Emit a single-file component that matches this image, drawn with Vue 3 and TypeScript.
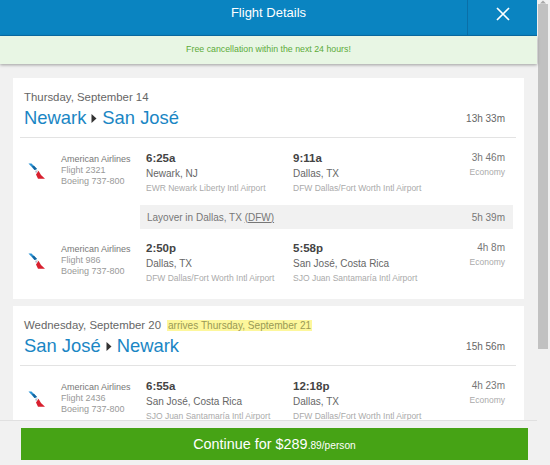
<script setup lang="ts">
interface Seg { airline: string; flight: string; plane: string; dep: string; depCity: string; depAir: string; arr: string; arrCity: string; arrAir: string; dur: string; layover?: boolean }
interface Trip { date: string; arrives?: string; from: string; to: string; total: string; segs: Seg[] }
const trips: Trip[] = [
  { date: 'Thursday, September 14', from: 'Newark', to: 'San José', total: '13h 33m', segs: [
    { airline: 'American Airlines', flight: 'Flight 2321', plane: 'Boeing 737-800', dep: '6:25a', depCity: 'Newark, NJ', depAir: 'EWR Newark Liberty Intl Airport', arr: '9:11a', arrCity: 'Dallas, TX', arrAir: 'DFW Dallas/Fort Worth Intl Airport', dur: '3h 46m', layover: true },
    { airline: 'American Airlines', flight: 'Flight 986', plane: 'Boeing 737-800', dep: '2:50p', depCity: 'Dallas, TX', depAir: 'DFW Dallas/Fort Worth Intl Airport', arr: '5:58p', arrCity: 'San José, Costa Rica', arrAir: 'SJO Juan Santamaría Intl Airport', dur: '4h 8m' }
  ] },
  { date: 'Wednesday, September 20', arrives: 'arrives Thursday, September 21', from: 'San José', to: 'Newark', total: '15h 56m', segs: [
    { airline: 'American Airlines', flight: 'Flight 2436', plane: 'Boeing 737-800', dep: '6:55a', depCity: 'San José, Costa Rica', depAir: 'SJO Juan Santamaría Intl Airport', arr: '12:18p', arrCity: 'Dallas, TX', arrAir: 'DFW Dallas/Fort Worth Intl Airport', dur: '4h 23m' }
  ] }
]
</script>

<template>
  <div class="page">
    <div class="main">
      <header class="header">
        <div class="title">Flight Details</div>
        <div class="close">
          <svg width="14" height="14" viewBox="0 0 14 14"><path d="M1 1 L13 13 M13 1 L1 13" stroke="#fff" stroke-width="1.7" fill="none" /></svg>
        </div>
      </header>
      <div class="banner">Free cancellation within the next 24 hours!</div>
      <div class="content">
        <section v-for="t in trips" :key="t.date" class="card">
          <div class="trip-head">
            <div class="date">{{ t.date }}<span v-if="t.arrives" class="arrives">{{ t.arrives }}</span></div>
            <div class="route-row">
              <div class="route">{{ t.from }}<svg class="arrow" width="6" height="9" viewBox="0 0 6 9"><path d="M0.5 0 L5.5 4.5 L0.5 9 Z" fill="#333" /></svg>{{ t.to }}</div>
              <div class="total">{{ t.total }}</div>
            </div>
          </div>
          <div class="segs">
            <template v-for="s in t.segs" :key="s.flight">
              <div class="seg">
                <div class="logo">
                  <svg width="19" height="18" viewBox="0 0 19 18">
                    <path d="M0.5 0.5 L3.5 0.5 L9 6 L6.5 7 Z" fill="#2a93d5" />
                    <path d="M4 3.2 L6 2.8 L9 6 L6.5 7 Z" fill="#14659f" />
                    <path d="M10.5 7.8 L13 12 L17 15.8 L10 15.8 L8 11.5 Z" fill="#d8202f" />
                    <path d="M7 7.8 L10 7.2 L8 10.5 Z" fill="#b9c3cc" />
                  </svg>
                </div>
                <div class="airline">
                  <div class="name">{{ s.airline }}</div>
                  <div class="sub">{{ s.flight }}</div>
                  <div class="sub">{{ s.plane }}</div>
                </div>
                <div class="stop">
                  <div class="time">{{ s.dep }}</div>
                  <div class="city">{{ s.depCity }}</div>
                  <div class="airport">{{ s.depAir }}</div>
                </div>
                <div class="stop">
                  <div class="time">{{ s.arr }}</div>
                  <div class="city">{{ s.arrCity }}</div>
                  <div class="airport">{{ s.arrAir }}</div>
                </div>
                <div class="dur">
                  <div class="dur-time">{{ s.dur }}</div>
                  <div class="cabin">Economy</div>
                </div>
              </div>
              <div v-if="s.layover" class="layover">
                <span>Layover in Dallas, TX <u>(DFW)</u></span>
                <span>5h 39m</span>
              </div>
            </template>
          </div>
        </section>
      </div>
      <footer class="footer">
        <button class="continue">Continue for <span class="price">$289</span><span class="cents">.89/person</span></button>
      </footer>
    </div>
    <div class="scrollbar">
      <svg class="scroll-up" width="10" height="4" viewBox="0 0 10 4"><path d="M5 0.5 L8 3.5 L2 3.5 Z" fill="#a8a8a8" /></svg>
      <div class="thumb"></div>
    </div>
  </div>
</template>

<style>
html, body { margin: 0; padding: 0; overflow: hidden; background: #fff; }
</style>

<style scoped>
.page {
  display: flex;
  width: 550px;
  height: 465px;
  overflow: hidden;
  font-family: "Liberation Sans", Arial, sans-serif;
  color: #555;
  background: #f1f1f1;
}
.main {
  width: 537px;
  height: 465px;
  display: flex;
  flex-direction: column;
  position: relative;
}
.header {
  flex: none;
  height: 35px;
  background: #0a84c1;
  border-bottom: 1px solid #0a6fa8;
  display: flex;
  position: relative;
  justify-content: center;
  align-items: center;
}
.title { color: #fff; font-size: 13px; line-height: 26px; padding-bottom: 9px; }
.close {
  position: absolute;
  right: 0;
  top: 0;
  width: 70px;
  height: 35px;
  border-left: 1px solid #0a6fa8;
  box-sizing: border-box;
  display: flex;
  align-items: center;
  justify-content: center;
  padding-bottom: 7px;
}
.banner {
  flex: none;
  height: 28px;
  line-height: 27px;
  background: #e8f6e4;
  color: #5cab3a;
  font-size: 8.8px;
  text-align: center;
  box-shadow: 0 1px 3px rgba(0, 0, 0, 0.35);
  position: relative;
  z-index: 1;
}
.content {
  flex: 1;
  min-height: 0;
  overflow: hidden;
  padding: 14px 13px 0;
  display: flex;
  flex-direction: column;
  gap: 7px;
}
.card {
  flex: none;
  background: #fff;
  padding: 0 8px 4px 7px;
}
.trip-head {
  padding: 12px 11px 0 4px;
  height: 47px;
  border-bottom: 1px solid #e3e3e3;
}
.date { font-size: 11.4px; line-height: 15px; color: #666; white-space: nowrap; }
.arrives { background: #fdf79c; color: #9a9a55; font-size: 10.1px; margin-left: 6px; padding: 0 1px; }
.route-row { display: flex; justify-content: space-between; align-items: center; margin-top: 1px; }
.route { font-size: 18.4px; line-height: 24px; color: #1a86c4; display: flex; align-items: center; }
.arrow { margin: 1px 5px 0 5px; }
.total { font-size: 10px; color: #666; }
.segs { padding-top: 13px; }
.seg { display: flex; height: 54px; box-sizing: border-box; }
.logo { width: 41px; padding: 12px 0 0 8px; box-sizing: border-box; flex: none; }
.airline { width: 85px; flex: none; font-size: 9px; line-height: 11px; padding-top: 3px; color: #777; }
.airline .sub { color: #999; }
.stop { width: 147px; flex: none; }
.time { font-size: 11.5px; line-height: 14px; font-weight: bold; color: #444; }
.city { font-size: 10px; line-height: 17px; color: #666; }
.airport { font-size: 8.5px; line-height: 12px; color: #aaa; white-space: nowrap; }
.dur { flex: 1; text-align: right; padding-right: 11px; }
.dur-time { font-size: 10px; line-height: 14px; color: #777; }
.cabin { font-size: 8.5px; line-height: 14px; color: #aaa; }
.layover {
  margin-left: 120px;
  margin-right: 3px;
  margin-bottom: 12px;
  height: 24px;
  background: #f1f1f1;
  display: flex;
  justify-content: space-between;
  align-items: center;
  padding: 0 8px 0 7px;
  font-size: 10px;
  color: #777;
}
.footer {
  position: absolute;
  left: 0;
  right: 0;
  bottom: 0;
  height: 45px;
  background: #f1f1f1;
  border-top: 1px solid #e0e0e0;
  box-sizing: border-box;
  padding: 7px 9px 5px 21px;
  z-index: 2;
}
.continue {
  display: block;
  width: 100%;
  height: 32px;
  background: #46a315;
  color: #fff;
  border: none;
  padding: 0;
  font-family: inherit;
  font-size: 14.4px;
  text-align: center;
}
.cents { font-size: 10.2px; }
.scrollbar { flex: none; width: 13px; background: #f1f1f1; padding: 0 2px 0 1px; box-sizing: border-box; }
.scroll-up { display: block; }
.thumb { width: 10px; height: 345px; background: #c1c1c1; }
</style>
